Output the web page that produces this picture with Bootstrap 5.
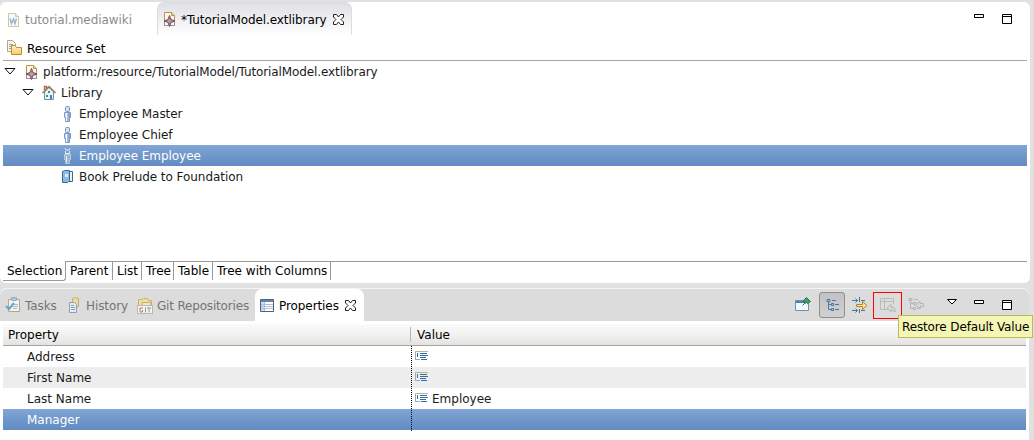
<!DOCTYPE html>
<html lang="en">
<head>
<meta charset="utf-8">
<title>Tutorial Model</title>
<link href="https://cdn.jsdelivr.net/npm/bootstrap@5.3.0/dist/css/bootstrap.min.css" rel="stylesheet">
<style>
body{width:1034px;height:440px;overflow:hidden;background:#e1e1e1;font:12px/21px "DejaVu Sans",sans-serif;color:#1a1a1a}
svg{display:block;flex:none}
span,.name-col{line-height:19px;padding-top:2px;white-space:nowrap}
.panel{background:#fff;border-radius:6px;overflow:hidden;width:1030px}
.editor{margin-top:2px;height:281px}
.props{margin-top:5px;height:152px;width:1029px;border-radius:7px 7px 0 0}
.editor-tabs{height:33px}
.tab-on{width:195px;background:linear-gradient(#dfdfe5,#fff);border:1px solid #dcdce4;border-bottom:0;border-radius:7px 7px 0 0;color:#000;letter-spacing:-.08px}
.dim{color:#8c8c8c;letter-spacing:-.05px}
.res{height:25px;padding-left:6px}
.tree{margin:0 3px;border-top:1px solid #a9a5a2;height:202px;letter-spacing:-.05px}
.tree-row{height:21px}
.long-path{letter-spacing:-.11px}
.picked{background:linear-gradient(#82a6d6,#6f97ca 50%,#628bc2);color:#fff}
.pages{height:22px;color:#000;margin-right:3px}
.page-tab{border-top:1px solid #999;border-right:1px solid #999;height:19px;line-height:19px;padding-left:4px;white-space:nowrap}
.page-tab.on{border-top:0;border-bottom:1px solid #999;border-radius:0 0 3px 0;margin-left:3px;line-height:21px;height:20px}
.view-tabs{height:33px;background:#dcdcdc;border-top:1px solid #f4f4f4;border-radius:7px 7px 0 0;color:#747474;letter-spacing:-.08px}
.git{letter-spacing:-.18px}
.view-on{width:109px;background:#fff;border-radius:7px 7px 0 0;color:#000;height:32px}
.head{height:22px;margin:3px 3px 0 3px;background:linear-gradient(#fbfbfb,#f2f1f0 50%,#e4e3e1);border-bottom:1px solid #a6a49e;color:#000}
.col-line{width:1px;height:15px;margin-top:3px;background:#b8b6b3}
.name-col{width:408px;flex:none}
.prop-row{height:21px;margin:0 3px}
.stripe{background:#ededed}
.dots{position:absolute;left:411px;top:346px;width:1px;height:85px;background:repeating-linear-gradient(#000 0 1px,transparent 1px 2px)}
.tip{position:absolute;left:898px;top:315px;width:135px;height:23px;background:#f5f5b5;border:1px solid #b9b955;color:#000;padding-left:3px;line-height:22px;white-space:nowrap;letter-spacing:-.13px}
.toggle{width:26px;height:26px;background:linear-gradient(#c2c2c2,#d0d0d0);border:1px solid #8f8f8f;border-radius:3px}
.marked{width:29px;height:27px;border:1px solid #f00}
</style>
<script src="https://cdn.jsdelivr.net/npm/bootstrap@5.3.0/dist/js/bootstrap.bundle.min.js"></script>
</head>
<body class="position-relative m-0">
<svg width="0" height="0" class="position-absolute">
<defs>
<linearGradient id="gb" x1="0" x2="1"><stop offset="0" stop-color="#e6eefa"/><stop offset="1" stop-color="#6d92c4"/></linearGradient>
<linearGradient id="gf" x1="0" y1="0" x2="0" y2="1"><stop offset="0" stop-color="#fff3c4"/><stop offset="1" stop-color="#f6cb68"/></linearGradient>
<symbol id="model" viewBox="0 0 16 16"><path d="M2.500 1.500h7l3 3v10h-10z" fill="#fbf8e8" stroke="#b4934a"/><path d="M9.500 1.500v3h3" fill="#e9d393" stroke="#b4934a"/><path d="M2.500 8.500v6h10v-6" fill="none" stroke="#8796ad"/><path d="M7.500 4.500L9 8.500l4 1.500-4 1.500-1.500 4L6 11.500 2 10l4-1.500z" fill="#c9a5b9" stroke="#943663"/><path d="M7.500 7L10.500 10 7.500 13 4.500 10z" fill="#aaa89c" stroke="#7c6977"/></symbol>
<symbol id="close" viewBox="0 0 11 11"><path d="M.5.5h3l2 2.500 2-2.500h3v2.500L8 5.500l2.500 2.500v2.500h-3l-2-2.500-2 2.500h-3V8L3 5.500.5 3z" fill="#fff" stroke="#222"/></symbol>
<symbol id="person" viewBox="0 0 16 16"><path d="M5.500 6.500h6v5h-1v4h-4v-4h-1z" fill="url(#gb)" stroke="#7c9ac2"/><path d="M7.500 7v8" stroke="#f6faff"/><rect x="6.500" y=".5" width="4" height="5" rx="1" fill="#d4e1f3" stroke="#7593bd"/></symbol>
<symbol id="tri" viewBox="0 0 12 7"><path d="M1 .5h10L6 6z" fill="#fff" stroke="#111"/></symbol>
<symbol id="field" viewBox="0 0 13 10"><path d="M.5 9V.5H13" fill="none" stroke="#b8b78a"/><path d="M.5 1v7.500H5" fill="none" stroke="#8fafc4"/><path d="M2.500 2v4M5 2.500h7M5 4.500h8M5 6.500h6M6 8.500h6" stroke="#316ea7"/></symbol>
<symbol id="nodes" viewBox="0 0 13 12"><path d="M2.500 3v7.500H5M2.500 5.500H5" fill="none" stroke="currentColor"/><path d="M1 .5h3v2H1zM5.500 4.500h2v2h-2zM5.500 9.500h2v2h-2zM6 1.500h4M9 5.500h4M9 10.500h4" fill="none" stroke="currentColor"/></symbol>
<symbol id="minim" viewBox="0 0 10 4"><path d="M.5.5h9v3h-9z" fill="#fff" stroke="#000"/></symbol>
<symbol id="maxim" viewBox="0 0 10 10"><path d="M.5.5h9v9h-9zM1 2.500h8" fill="#fff" stroke="#000"/></symbol>
</defs>
</svg>
<main>
<section class="panel editor">
 <div class="editor-tabs d-flex">
  <div class="d-flex align-items-center dim" style="width:157px;padding-left:6px;padding-top:2px"><svg width="16" height="16" viewBox="0 0 16 16"><path d="M2.500 1.500h7l3 3v10h-10z" fill="#f8fafc" stroke="#d4c6a5"/><path d="M9.500 1.500v3h3" fill="none" stroke="#d4c6a5"/><path d="M4 6.500l1.500 5L7.500 7l1.500 4.500 1.500-5" fill="none" stroke="#9eb4ca" stroke-width="1.500"/></svg><span style="margin-left:3px">tutorial.mediawiki</span></div>
  <div class="tab-on d-flex align-items-center"><svg width="16" height="16" style="margin-left:4px"><use href="#model"/></svg><span style="margin-left:3px">*TutorialModel.extlibrary</span><svg width="11" height="11" style="margin-left:6px"><use href="#close"/></svg></div>
  <div class="ms-auto d-flex" style="margin-right:18px;padding-top:12px"><svg width="10" height="4"><use href="#minim"/></svg><svg width="10" height="10" style="margin-left:18px"><use href="#maxim"/></svg></div>
 </div>
 <div class="res d-flex align-items-center text-black"><svg width="16" height="16" viewBox="0 0 16 16"><path d="M1.500.5h5l3 3v8h-8z" fill="#f2f6fb" stroke="#bba468"/><path d="M3 4.500h4M3 6.500h4M3 8.500h2" stroke="#89a2c2"/><path d="M5.500 14.500v-9h4l1 2h5v7z" fill="url(#gf)" stroke="#c28a31"/></svg><span style="margin-left:5px;padding-top:3px">Resource Set</span></div>
 <div class="tree">
  <div class="tree-row d-flex align-items-center"><svg width="12" height="7" style="margin-left:1px"><use href="#tri"/></svg><svg width="16" height="16" style="margin-left:8px"><use href="#model"/></svg><span class="long-path" style="margin-left:3px">platform:/resource/TutorialModel/TutorialModel.extlibrary</span></div>
  <div class="tree-row d-flex align-items-center"><svg width="12" height="7" style="margin-left:19px"><use href="#tri"/></svg><svg width="16" height="16" viewBox="0 0 16 16" style="margin-left:7px"><path d="M3.500 7v7.500h9V7L8 2.500z" fill="#e9f3fb" stroke="#6992b3"/><path d="M1.500 8L8 1.500 14.500 8M3.500 5V1.500h2V4" fill="none" stroke="#a57850" stroke-width="1.500"/><path d="M7 6h2v2H7zM5 10h2v2H5z" fill="#439659"/><path d="M9 10h2v4H9z" fill="#477fb4"/></svg><span style="margin-left:4px">Library</span></div>
  <div class="tree-row d-flex align-items-center"><svg width="16" height="16" style="margin-left:56px"><use href="#person"/></svg><span style="margin-left:4px">Employee Master</span></div>
  <div class="tree-row d-flex align-items-center"><svg width="16" height="16" style="margin-left:56px"><use href="#person"/></svg><span style="margin-left:4px">Employee Chief</span></div>
  <div class="tree-row d-flex align-items-center picked"><svg width="16" height="16" viewBox="0 0 16 16" style="margin-left:56px"><path d="M5.500 6.500h6v5h-1v4h-4v-4h-1z" fill="#9bb3d3" stroke="#d2deed" stroke-dasharray="2 1"/><path d="M6 .5l1 1.500h3l1-1.500M6.500 3v2.500h4V3M7.500 8v6" fill="none" stroke="#eaf1fa"/></svg><span style="margin-left:4px">Employee Employee</span></div>
  <div class="tree-row d-flex align-items-center"><svg width="16" height="16" viewBox="0 0 16 16" style="margin-left:56px"><path d="M6.500 2.500h7v10h-7z" fill="#f4f1e5" stroke="#44658b"/><path d="M3.500 2.500l2-1h5v10l-2 2h-5z" fill="#8bbce9" stroke="#3d6797"/><path d="M6 5h3v3H6z" fill="#d5ebfb"/></svg><span style="margin-left:4px">Book Prelude to Foundation</span></div>
 </div>
 <div class="pages d-flex" style="margin-top:-1px">
  <div class="page-tab on" style="width:63px">Selection</div><div class="page-tab" style="width:47px">Parent</div><div class="page-tab" style="width:29px">List</div><div class="page-tab" style="width:32px">Tree</div><div class="page-tab" style="width:39px">Table</div><div class="page-tab" style="width:118px">Tree with Columns</div><div class="flex-fill" style="border-top:1px solid #999"></div>
 </div>
</section>
<section class="panel props">
 <div class="view-tabs d-flex align-items-center">
  <div class="d-flex align-items-center" style="width:64px;padding-left:5px"><svg width="16" height="16" viewBox="0 0 16 16" opacity=".65"><path d="M3.500 2.500h11v12h-11z" fill="#fff" stroke="#ae8956"/><path d="M6.500.5h5v3h-5z" fill="#9db7d1" stroke="#7394b7"/><path d="M8 7.500h5M8 9.500h5M8 11.500h4" stroke="#94a9c0"/><path d="M1 9l3 3 5-6" fill="none" stroke="#2d83bc" stroke-width="2"/></svg><span style="margin-left:4px">Tasks</span></div>
  <div class="d-flex align-items-center" style="width:73px;padding-left:3px"><svg width="16" height="16" viewBox="0 0 16 16" opacity=".65"><path d="M5.500 1.500q3-2 6 0v8q-3 2-6 0z" fill="#f5d887" stroke="#bd933b"/><path d="M2.500 5.500h5l2 2v8h-7z" fill="#eef4fb" stroke="#637fae"/><path d="M4 8.500h3M4 10.500h4M4 12.500h4" stroke="#637fae"/></svg><span style="margin-left:3px">History</span></div>
  <div class="d-flex align-items-center git" style="width:118px"><svg width="16" height="17" viewBox="0 0 16 17" opacity=".7"><path d="M1.500 8V2.500h4l1-1h4l1 2h3V9" fill="#f6dc91" stroke="#c69b44"/><path d="M5 8V5.500h9V9" fill="#faeabb" stroke="#c69b44"/><rect x=".5" y="8.500" width="15" height="8" fill="#fff" stroke="#aaa"/><path d="M6 11H3v4h2.500v-2" fill="none" stroke="#b4464e"/><path d="M8.500 10.500v5" stroke="#777"/><path d="M10 11h4m-2 0v4.500" stroke="#3a9656"/></svg><span style="margin-left:4px">Git Repositories</span></div>
  <div class="view-on d-flex align-items-center"><svg width="14" height="13" viewBox="0 0 14 13" style="margin-left:5px"><path d="M.5.5h13v12H.5z" fill="#fff" stroke="#4a6384"/><path d="M1 1h12v2H1z" fill="#6682a8"/><path d="M1 3h3v9H1z" fill="#cddbed"/><path d="M4.500 3v9M1 5.500h12M1 7.500h12M1 9.500h12" stroke="#b0bed2"/></svg><span style="margin-left:5px">Properties</span><svg width="11" height="11" style="margin-left:6px"><use href="#close"/></svg></div>
  <div class="ms-auto d-flex align-items-center" style="margin-right:17px">
   <svg width="16" height="16" viewBox="0 0 16 16"><path d="M.5 3.500h13v10H.5z" fill="#f2faff" stroke="#6b93b5"/><path d="M1 4h12v2H1z" fill="#4f7fab"/><path d="M7.500 8.500l3-3" stroke="#555"/><path d="M8.500 3.500l3-3 4 4-3 2-1-1-2 1z" fill="#439d5b" stroke="#287541"/></svg>
   <div class="toggle d-flex align-items-center justify-content-center" style="margin-left:8px;color:#4a74b0"><svg width="13" height="12"><use href="#nodes"/></svg></div>
   <svg width="16" height="16" viewBox="0 0 16 16" style="margin-left:7px"><path d="M0 3.500h6M0 13.500h6M9 3.500h4M9 13.500h4" stroke="#46759c"/><path d="M7.500 0v5M7.500 12v4M3.500 1.500l2 2-2 2M3.500 11.500l2 2-2 2" fill="none" stroke="#46759c"/><path d="M4.500 7.500h6V4.500L15 8.500l-4.500 4v-3h-6z" fill="#fbe39d" stroke="#bd8124"/></svg>
   <div class="marked d-flex align-items-center justify-content-center" style="margin-left:5px"><svg width="16" height="16" viewBox="0 0 16 16"><path d="M9 12.500H.5V1.500h13V7M1 4.500h12M4.500 2v10" fill="none" stroke="#bcbcbc"/><path d="M15 15q1-5-4-5V7l-4 4 4 4v-2q2 0 4 2z" fill="#d6d6d6" stroke="#b8b8b8"/></svg></div>
   <div style="margin-left:6px;color:#b4b4b4"><svg width="16" height="14" viewBox="0 0 16 14"><use href="#nodes" width="13" height="12"/><path d="M15.500 5.500H12V3L7.500 7l4.500 4V8.500h3.500z" fill="#d8d8d8" stroke="#b4b4b4"/></svg></div>
   <svg width="10" height="6" viewBox="0 0 10 6" style="margin:-6px 0 0 23px"><path d="M.5.5h9L5 5z" fill="#fff" stroke="#000"/></svg><svg width="10" height="4" style="margin:-6px 0 0 17px"><use href="#minim"/></svg><svg width="10" height="10" style="margin-left:18px"><use href="#maxim"/></svg>
  </div>
 </div>
 <div class="head d-flex"><div class="name-col" style="padding-left:5px;width:407px">Property</div><div class="col-line"></div><span style="padding-left:6px">Value</span></div>
 <div class="prop-row d-flex align-items-center"><div class="name-col" style="padding-left:24px">Address</div><svg width="13" height="10" style="margin:-2px 0 0 4px"><use href="#field"/></svg></div>
 <div class="prop-row d-flex align-items-center stripe"><div class="name-col" style="padding-left:24px">First Name</div><svg width="13" height="10" style="margin:-2px 0 0 4px"><use href="#field"/></svg></div>
 <div class="prop-row d-flex align-items-center"><div class="name-col" style="padding-left:24px">Last Name</div><svg width="13" height="10" style="margin:-2px 0 0 4px"><use href="#field"/></svg><span style="margin-left:4px">Employee</span></div>
 <div class="prop-row d-flex align-items-center picked"><div class="name-col" style="padding-left:24px">Manager</div></div>
</section>
</main>
<div class="dots"></div>
<div class="tip">Restore Default Value</div>
</body>
</html>
